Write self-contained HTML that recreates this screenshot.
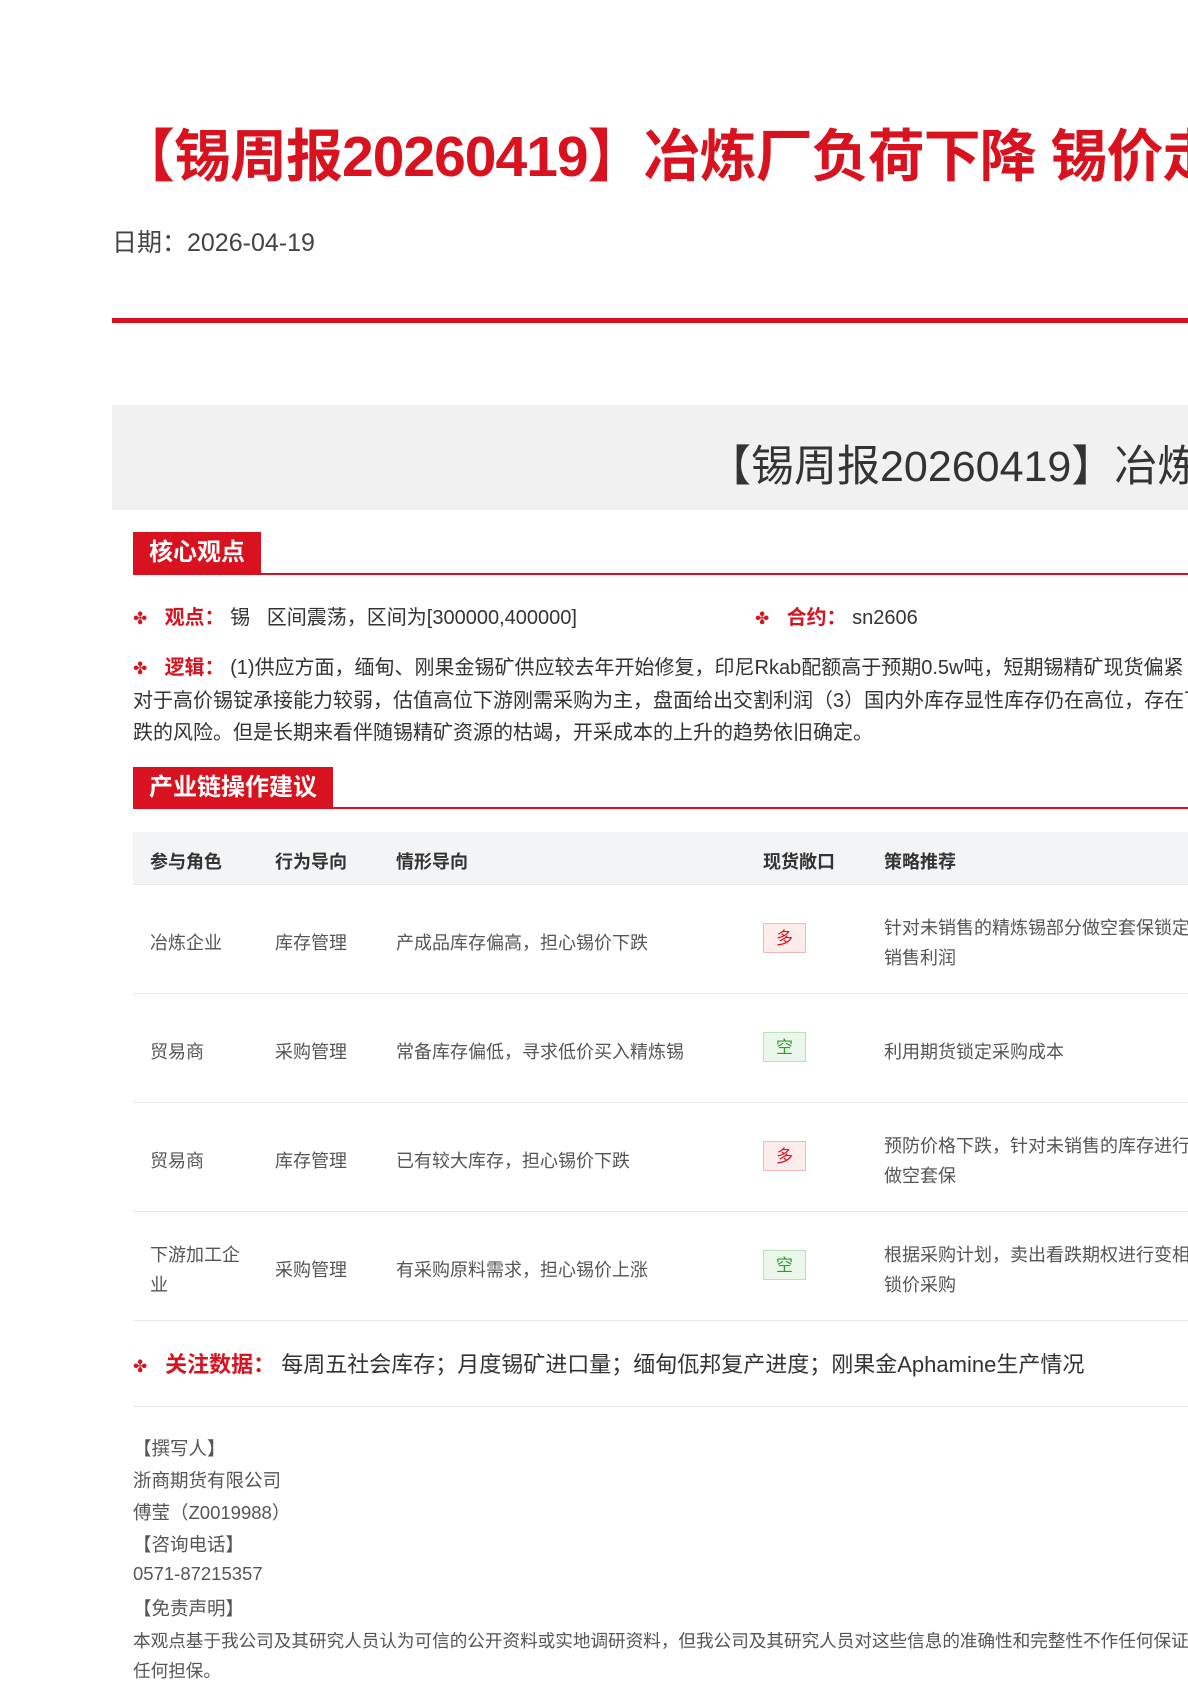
<!DOCTYPE html>
<html><head><meta charset="utf-8"><style>
html,body{margin:0;padding:0;width:1188px;height:1680px;overflow:hidden;background:#fff;font-family:"Liberation Sans","Noto Sans CJK SC",sans-serif;color:#333}
.a{position:absolute;white-space:nowrap}
.red{color:#d9121f}
.dot{color:#d9121f;font-size:17px;display:inline-block;width:26px}
.hdr{position:absolute;left:133px;height:42px;background:#d9121f;color:#fff;font-size:24px;line-height:42px;padding:0 16px;font-weight:bold}
.hl{position:absolute;left:133px;width:1100px;height:2px;background:#d9121f}
.td{position:absolute;font-size:18px;color:#555;white-space:nowrap}
.th{position:absolute;font-size:18px;color:#333;font-weight:bold}
.tag{position:absolute;left:763px;width:43px;height:30px;line-height:30px;text-align:center;font-size:17px;box-sizing:border-box}
.duo{background:#fdecec;border:1px solid #f5b8b8;color:#d9121f}
.kong{background:#eaf7ea;border:1px solid #b9e2b9;color:#2a9d2a}
.rl{position:absolute;left:133px;width:1100px;height:1px;background:#e6e8eb}
.ft{position:absolute;left:133px;font-size:18.5px;color:#555;white-space:nowrap}
</style></head><body>
<div class="a red" style="left:118px;top:111px;font-size:57px;font-weight:bold;letter-spacing:-1px">【锡周报20260419】冶炼厂负荷下降 锡价走弱</div>
<div class="a" style="left:112px;top:223px;font-size:25px;color:#444">日期：2026-04-19</div>
<div style="position:absolute;left:112px;top:318px;width:1100px;height:5px;background:#d9121f"></div>
<div style="position:absolute;left:112px;top:405px;width:1100px;height:105px;background:#f1f1f1"></div>
<div class="a" style="left:708px;top:432px;font-size:43px;color:#333">【锡周报20260419】冶炼厂负荷下降</div>

<div class="hdr" style="top:532px">核心观点</div>
<div class="hl" style="top:573px"></div>
<div class="a" style="left:133px;top:601px;font-size:20px"><span class="dot">✤</span>&nbsp;<b class="red">观点：</b>&nbsp;锡&nbsp;&nbsp;&nbsp;区间震荡，区间为[300000,400000]</div>
<div class="a" style="left:755px;top:601px;font-size:20px"><span class="dot">✤</span>&nbsp;<b class="red">合约：</b>&nbsp;sn2606</div>
<div class="a" style="left:133px;top:652px;font-size:20px;line-height:32px"><span class="dot">✤</span>&nbsp;<b class="red">逻辑：</b>&nbsp;(1)供应方面，缅甸、刚果金锡矿供应较去年开始修复，印尼Rkab配额高于预期0.5w吨，短期锡精矿现货偏紧<br>对于高价锡锭承接能力较弱，估值高位下游刚需采购为主，盘面给出交割利润（3）国内外库存显性库存仍在高位，存在下<br>跌的风险。但是长期来看伴随锡精矿资源的枯竭，开采成本的上升的趋势依旧确定。</div>

<div class="hdr" style="top:767px">产业链操作建议</div>
<div class="hl" style="top:807px"></div>
<div style="position:absolute;left:133px;top:832px;width:1100px;height:52px;background:#f3f4f6;border-bottom:1px solid #e6e8eb"></div>
<div class="th" style="left:150px;top:848px">参与角色</div>
<div class="th" style="left:275px;top:848px">行为导向</div>
<div class="th" style="left:396px;top:848px">情形导向</div>
<div class="th" style="left:763px;top:848px">现货敞口</div>
<div class="th" style="left:884px;top:848px">策略推荐</div>

<div class="td" style="left:150px;top:929px">冶炼企业</div><div class="td" style="left:275px;top:929px">库存管理</div><div class="td" style="left:396px;top:929px">产成品库存偏高，担心锡价下跌</div><div class="tag duo" style="top:923px">多</div><div class="td" style="left:884px;top:913px;line-height:30px">针对未销售的精炼锡部分做空套保锁定<br>销售利润</div>
<div class="rl" style="top:993px"></div>
<div class="td" style="left:150px;top:1038px">贸易商</div><div class="td" style="left:275px;top:1038px">采购管理</div><div class="td" style="left:396px;top:1038px">常备库存偏低，寻求低价买入精炼锡</div><div class="tag kong" style="top:1032px">空</div><div class="td" style="left:884px;top:1038px">利用期货锁定采购成本</div>
<div class="rl" style="top:1102px"></div>
<div class="td" style="left:150px;top:1147px">贸易商</div><div class="td" style="left:275px;top:1147px">库存管理</div><div class="td" style="left:396px;top:1147px">已有较大库存，担心锡价下跌</div><div class="tag duo" style="top:1141px">多</div><div class="td" style="left:884px;top:1131px;line-height:30px">预防价格下跌，针对未销售的库存进行<br>做空套保</div>
<div class="rl" style="top:1211px"></div>
<div class="td" style="left:150px;top:1240px;line-height:30px">下游加工企<br>业</div><div class="td" style="left:275px;top:1256px">采购管理</div><div class="td" style="left:396px;top:1256px">有采购原料需求，担心锡价上涨</div><div class="tag kong" style="top:1250px">空</div><div class="td" style="left:884px;top:1240px;line-height:30px">根据采购计划，卖出看跌期权进行变相<br>锁价采购</div>
<div class="rl" style="top:1320px"></div>

<div class="a" style="left:133px;top:1347px;font-size:22px"><span class="dot">✤</span>&nbsp;<b class="red">关注数据：</b>&nbsp;每周五社会库存；月度锡矿进口量；缅甸佤邦复产进度；刚果金Aphamine生产情况</div>
<div class="rl" style="top:1406px;background:#e3e5e8"></div>

<div class="ft" style="top:1435px">【撰写人】</div>
<div class="ft" style="top:1467px">浙商期货有限公司</div>
<div class="ft" style="top:1499px">傅莹（Z0019988）</div>
<div class="ft" style="top:1531px">【咨询电话】</div>
<div class="ft" style="top:1563px">0571-87215357</div>
<div class="ft" style="top:1595px">【免责声明】</div>
<div class="ft" style="top:1628px;font-size:17.6px">本观点基于我公司及其研究人员认为可信的公开资料或实地调研资料，但我公司及其研究人员对这些信息的准确性和完整性不作任何保证</div>
<div class="ft" style="top:1658px;font-size:17.6px">任何担保。</div>
</body></html>
